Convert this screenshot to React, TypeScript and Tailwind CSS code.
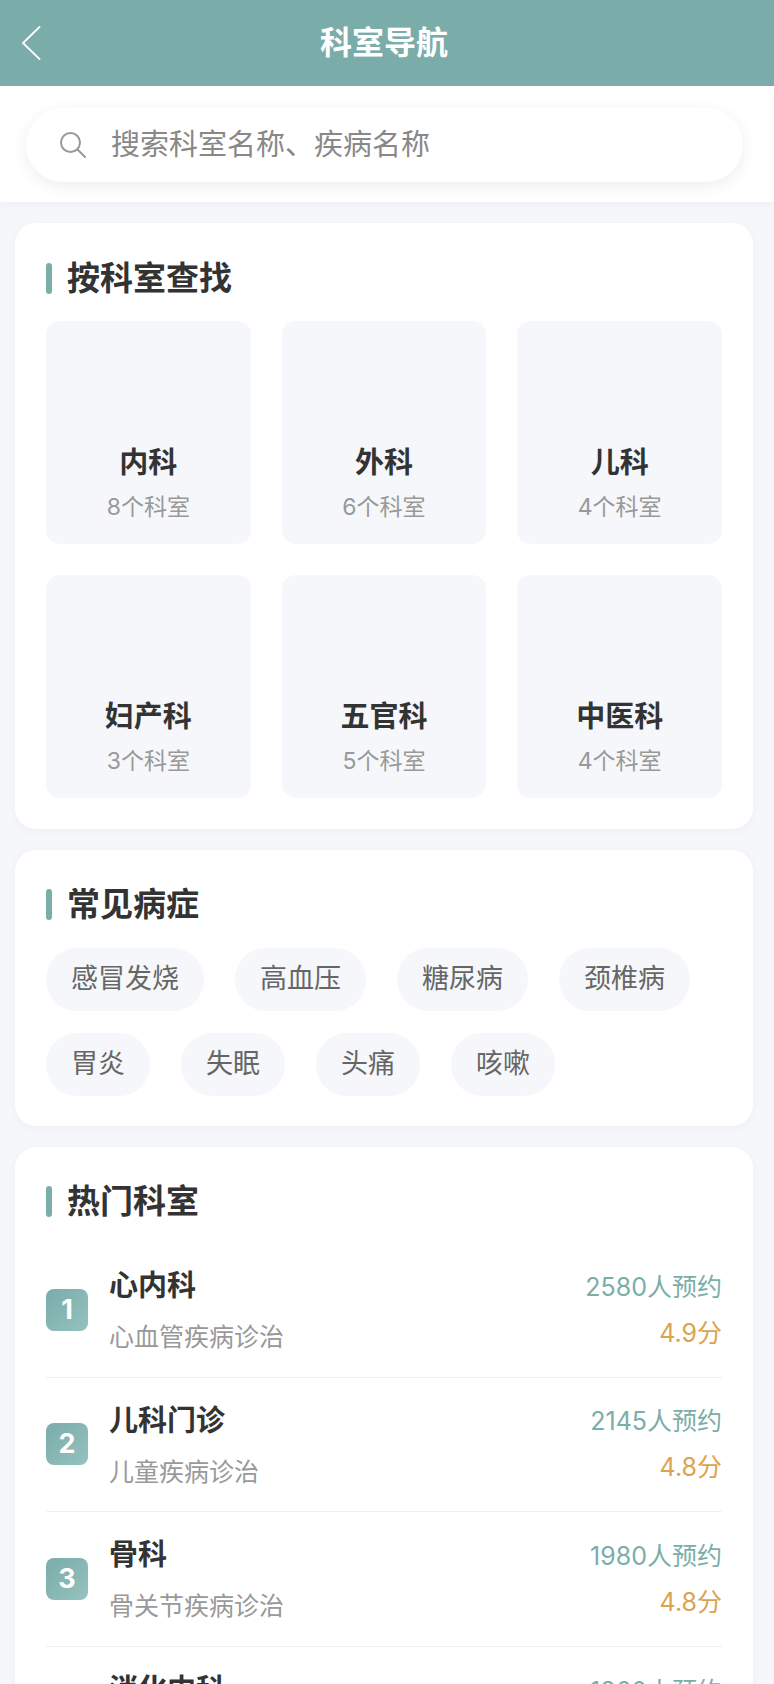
const departments = [
  { name: "内科", count: "8个科室" },
  { name: "外科", count: "6个科室" },
  { name: "儿科", count: "4个科室" },
  { name: "妇产科", count: "3个科室" },
  { name: "五官科", count: "5个科室" },
  { name: "中医科", count: "4个科室" },
];

const diseases = ["感冒发烧", "高血压", "糖尿病", "颈椎病", "胃炎", "失眠", "头痛", "咳嗽"];

const hotDepartments = [
  { rank: 1, name: "心内科", desc: "心血管疾病诊治", booked: "2580人预约", score: "4.9分" },
  { rank: 2, name: "儿科门诊", desc: "儿童疾病诊治", booked: "2145人预约", score: "4.8分" },
  { rank: 3, name: "骨科", desc: "骨关节疾病诊治", booked: "1980人预约", score: "4.8分" },
  { rank: 4, name: "消化内科", desc: "消化系统疾病诊治", booked: "1860人预约", score: "4.7分" },
];

function SectionTitle({ title }: { title: string }) {
  return (
    <div className="flex items-center h-[33px]">
      <span className="w-[6px] h-[31px] rounded-[3px] bg-[#7aaea9] mr-[15px]" />
      <h2 className="text-[33px] leading-[33px] font-bold text-[#333333]">{title}</h2>
    </div>
  );
}

export default function App() {
  return (
    <div
      className="h-[1684px] overflow-hidden bg-[#f5f7fa]"
      style={{ fontFamily: 'Inter, "Noto Sans CJK SC", sans-serif' }}
    >
      {/* Title bar */}
      <header className="relative h-[86px] flex items-center justify-center pr-[6px] bg-[#7aaca9]">
        <svg
          className="absolute left-[21px] top-[26px]"
          width="20"
          height="34"
          viewBox="0 0 20 34"
          fill="none"
          stroke="white"
          strokeWidth="1.8"
          strokeLinecap="round"
          strokeLinejoin="round"
        >
          <polyline points="18.5,1 2,17 18.5,33" />
        </svg>
        <h1 className="text-[32px] font-bold text-white">科室导航</h1>
      </header>

      {/* Search */}
      <div className="bg-white pl-[26px] pr-[31px] pt-[22px] pb-[20px] shadow-[0_2px_10px_rgba(0,0,0,0.04)]">
        <div className="flex items-center h-[74px] rounded-[37px] bg-white px-[34px] shadow-[0_4px_16px_rgba(0,0,0,0.07)]">
          <svg
            className="mr-[25px]"
            width="26"
            height="26"
            viewBox="0 0 26 26"
            fill="none"
            stroke="#999999"
            strokeWidth="2"
            strokeLinecap="round"
          >
            <circle cx="10.5" cy="10.5" r="9.5" />
            <line x1="17.5" y1="17.5" x2="25" y2="25" />
          </svg>
          <span className="text-[29px] text-[#888888]">搜索科室名称、疾病名称</span>
        </div>
      </div>

      <main className="flex flex-col gap-[21px] pl-[15px] pr-[21px] pt-[21px]">
        {/* Browse by department */}
        <section className="rounded-[21px] bg-white p-[31px] pt-[39px] shadow-[0_2px_10px_rgba(0,0,0,0.04)]">
          <SectionTitle title="按科室查找" />
          <div className="grid grid-cols-3 gap-[31px] mt-[26px]">
            {departments.map((d) => (
              <div
                key={d.name}
                className="flex flex-col items-center justify-end h-[223px] rounded-[14px] bg-[#f5f7fa] pb-[21px]"
              >
                <div className="text-[29px] leading-[40px] font-bold text-[#333333]">{d.name}</div>
                <div className="text-[23px] leading-[32px] mt-[8px] text-[#999999]">{d.count}</div>
              </div>
            ))}
          </div>
        </section>

        {/* Common conditions */}
        <section className="rounded-[21px] bg-white px-[31px] pb-[30px] pt-[38px] shadow-[0_2px_10px_rgba(0,0,0,0.04)]">
          <SectionTitle title="常见病症" />
          <div className="flex flex-wrap gap-x-[31px] gap-y-[22px] mt-[27px]">
            {diseases.map((name) => (
              <span
                key={name}
                className="flex items-center h-[63px] rounded-[31px] bg-[#f5f7fa] px-[25px] text-[27px] text-[#666666]"
              >
                {name}
              </span>
            ))}
          </div>
        </section>

        {/* Popular departments */}
        <section className="rounded-[21px] bg-white px-[31px] pt-[38px] shadow-[0_2px_10px_rgba(0,0,0,0.04)]">
          <SectionTitle title="热门科室" />
          <div className="mt-[25px]">
            {hotDepartments.map((d) => (
              <div
                key={d.rank}
                className="flex items-center h-[134.6px] border-b border-[#f0f0f0]"
              >
                <div className="flex items-center justify-center w-[42px] h-[42px] rounded-[8px] bg-gradient-to-br from-[#7aaca9] to-[#95c2be] text-[27px] font-bold text-white mr-[21px]">
                  {d.rank}
                </div>
                <div className="flex-1 pt-[2px]">
                  <div className="text-[29px] leading-[40px] font-bold text-[#333333]">{d.name}</div>
                  <div className="text-[25px] leading-[36px] mt-[13px] text-[#999999]">{d.desc}</div>
                </div>
                <div className="text-right">
                  <div className="text-[25px] leading-[36px] text-[#7aaea9]">{d.booked}</div>
                  <div className="text-[25px] leading-[36px] mt-[10px] text-[#dba350]">{d.score}</div>
                </div>
              </div>
            ))}
          </div>
        </section>
      </main>
    </div>
  );
}
